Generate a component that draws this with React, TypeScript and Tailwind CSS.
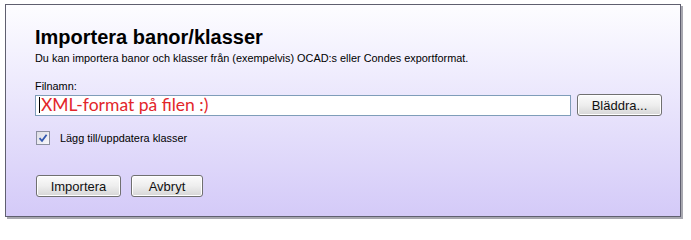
import { useState } from 'react';

const Btn = ({ label, width }: { label: string; width: string }) => (
  <button
    className={`${width} h-[22px] rounded-[3px] border border-[#707070] bg-gradient-to-b from-[#fbfbfb] via-[#eeeeee] to-[#d6d6d6] text-[13px] text-[#111] leading-none shadow-[inset_0_0_0_1px_#ffffff]`}
  >
    {label}
  </button>
);

const App = () => {
  const [checked, setChecked] = useState(true);

  return (
    <div className="w-[691px] h-[225px] bg-white pt-[4px] pl-[5px] font-['Liberation_Sans',Arial,sans-serif]">
      <div className="w-[676px] h-[213px] border border-[#5f5f6f] shadow-[2px_2px_0_#a8a8b0] bg-gradient-to-b from-[#fdfdff] to-[#d4caf8] pl-[29px] pt-[20px]">
        {/* Header */}
        <h1 className="text-[20px] font-bold text-black leading-[25px]">Importera banor/klasser</h1>
        <p className="text-[10.9px] text-black leading-[14px] mt-[1px]">
          Du kan importera banor och klasser från (exempelvis) OCAD:s eller Condes exportformat.
        </p>

        {/* File row */}
        <div className="mt-[14px] text-[10.9px] text-black leading-[14px]">Filnamn:</div>
        <div className="flex items-center gap-[6px] mt-[1px]">
          <div className="w-[536px] h-[21px] border border-[#7f9db9] bg-white flex items-center pl-[3px]">
            <span className="w-px h-[16px] bg-black mr-[1px]" />
            <span className="text-[17.5px] text-[#e2262b] leading-none font-['Lato',sans-serif]">XML-format på filen :)</span>
          </div>
          <Btn label="Bläddra..." width="w-[85px]" />
        </div>

        {/* Checkbox */}
        <label className="flex items-center gap-[10px] mt-[15px] ml-[1px] w-fit cursor-pointer">
          <span
            onClick={() => setChecked(!checked)}
            className="w-[14px] h-[14px] border border-[#8c8fa0] bg-gradient-to-br from-[#dcdce4] to-[#f8f8fc] flex items-center justify-center"
          >
            {checked && (
              <svg width="10" height="10" viewBox="0 0 10 10">
                <path d="M1.5 5.2 L4 7.8 L8.6 1.8" fill="none" stroke="#3358b0" strokeWidth="1.8" />
              </svg>
            )}
          </span>
          <span className="text-[10.9px] text-black leading-none">Lägg till/uppdatera klasser</span>
        </label>

        {/* Actions */}
        <div className="flex gap-[10px] mt-[30px] ml-[1px]">
          <Btn label="Importera" width="w-[85px]" />
          <Btn label="Avbryt" width="w-[72px]" />
        </div>
      </div>
    </div>
  );
};

export default App;
